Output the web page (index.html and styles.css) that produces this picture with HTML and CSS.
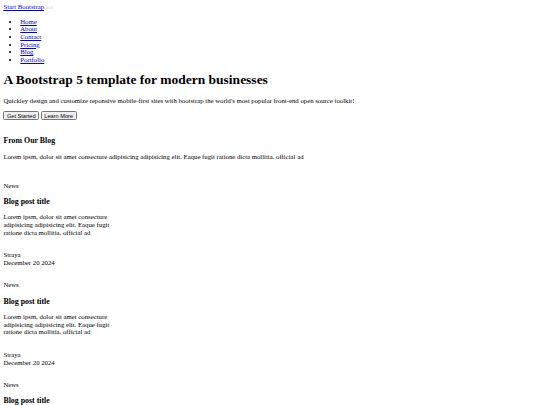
FILE: index.html
```html
<!DOCTYPE html>
<html lang="en">
<head>
  <meta charset="UTF-8" />
  <meta name="viewport" content="width=device-width, initial-scale=1.0" />
  <title>Start Bootstrap - Modern Business</title>
  <link rel="stylesheet" href="styles.css">
</head>
<body>
  <!-- ===== navbar ===== -->
  <nav class="navbar">
    <div class="container">
      <a class="navbar-brand" href="#">Start Bootstrap</a>
      <button class="navbar-toggler" type="button"><span class="navbar-toggler-icon"></span></button>
      <div class="navbar-collapse">
        <ul class="navbar-nav">
          <li><a href="#">Home</a></li>
          <li><a href="#">About</a></li>
          <li><a href="#">Contact</a></li>
          <li><a href="#">Pricing</a></li>
          <li><a href="#">Blog</a></li>
          <li><a href="#">Portfolio</a></li>
        </ul>
      </div>
    </div>
  </nav>

  <!-- ===== header ===== -->
  <header class="hero">
    <h1>A Bootstrap 5 template for modern businesses</h1>
    <p>Quickley design and customize reponsive mobile-first sites with bootstrap the world's most popular front-end open source toolkit!</p>
    <div class="hero-buttons">
      <button class="btn">Get Started</button>
      <button class="btn">Learn More</button>
    </div>
  </header>

  <!-- ===== blog ===== -->
  <section class="blog">
    <h3>From Our Blog</h3>
    <p>Lorem ipsm, dolor sit amet consecture adipisicing adipisicing elit. Eaque fugit ratione dicta mollitia. official ad</p>

    <div class="card">
      <div class="card-body">
        <div class="badge">News</div>
        <h3 class="card-title">Blog post title</h3>
        <p class="card-text">Lorem ipsm, dolor sit amet consecture adipisicing adipisicing elit. Eaque fugit ratione dicta mollitia. official ad</p>
      </div>
      <div class="card-footer">
        <div>Straya</div>
        <div>December 20 2024</div>
      </div>
    </div>

    <div class="card">
      <div class="card-body">
        <div class="badge">News</div>
        <h3 class="card-title">Blog post title</h3>
        <p class="card-text">Lorem ipsm, dolor sit amet consecture adipisicing adipisicing elit. Eaque fugit ratione dicta mollitia. official ad</p>
      </div>
      <div class="card-footer">
        <div>Straya</div>
        <div>December 20 2024</div>
      </div>
    </div>

    <div class="card">
      <div class="card-body">
        <div class="badge">News</div>
        <h3 class="card-title">Blog post title</h3>
        <p class="card-text">Lorem ipsm, dolor sit amet consecture adipisicing adipisicing elit. Eaque fugit ratione dicta mollitia. official ad</p>
      </div>
      <div class="card-footer">
        <div>Straya</div>
        <div>December 20 2024</div>
      </div>
    </div>
  </section>
</body>
</html>
```

FILE: styles.css
```css
html {
  zoom: 0.421875;
}

body {
  font-family: "Liberation Serif", "Times New Roman", serif;
  font-size: 16px;
  line-height: 18px;
  color: #000;
}

h1 {
  line-height: 37px;
}

h3 {
  line-height: 22px;
}

button {
  font-family: "Liberation Sans", Arial, sans-serif;
  font-size: 13.333px;
  line-height: 15px;
}

.navbar-brand {
  color: #0000ee;
}

.navbar-toggler {
  vertical-align: middle;
}

.navbar-nav a {
  color: #0000ee;
}

.hero {
  padding-bottom: 18px;
}

.blog > p {
  margin-bottom: 50px;
}

.card {
  width: 262px;
}

.card-title {
  margin: 18px 0 17px;
}

.card-text {
  margin: 0 0 36px;
}

.card-footer {
  margin-bottom: 35px;
}
```
